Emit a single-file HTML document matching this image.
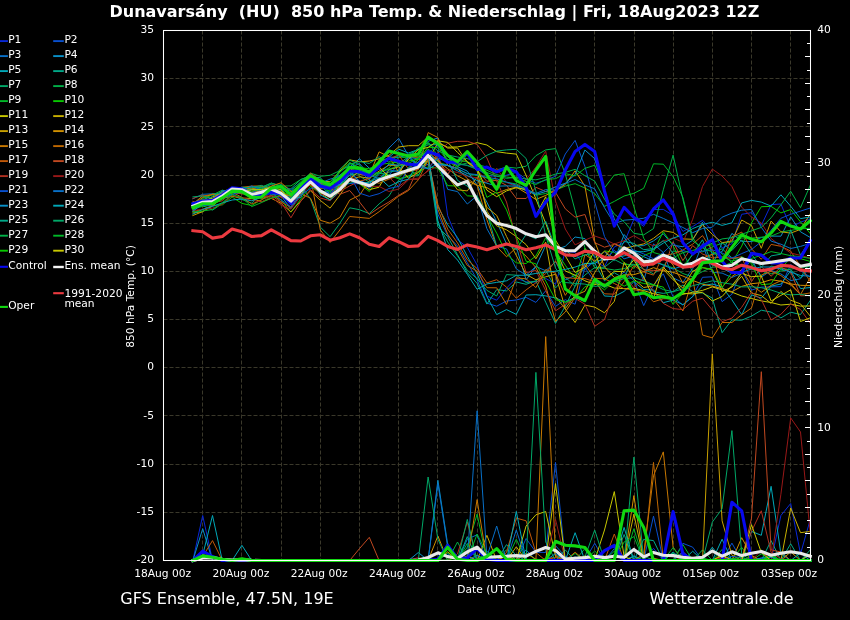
<!DOCTYPE html>
<html lang="de"><head><meta charset="utf-8"><title>Dunavarsány (HU) 850 hPa Temp. &amp; Niederschlag</title>
<style>html,body{margin:0;padding:0;background:#000;overflow:hidden}svg{display:block;will-change:transform}text{font-family:"DejaVu Sans", "Liberation Sans", sans-serif;fill:#fff}.t{font-size:10.67px}.m{fill:none;stroke-width:1;stroke-linejoin:round;stroke-linecap:square}.k{fill:none;stroke-width:3.1;stroke-linejoin:round;stroke-linecap:square}.g{stroke:#3a382a;stroke-width:1;stroke-dasharray:4 2;fill:none}.lg{stroke-width:1.9;fill:none}</style></head><body>
<svg width="850" height="620" viewBox="0 0 850 620">
<rect width="850" height="620" fill="#000"/>
<text x="434.4" y="16.6" text-anchor="middle" font-size="16" font-weight="bold" xml:space="preserve" style="white-space:pre">Dunavarsány  (HU)  850 hPa Temp. &amp; Niederschlag | Fri, 18Aug2023 12Z</text>
<path class="g" d="M202.50 30.5V560.5M241.50 30.5V560.5M281.50 30.5V560.5M320.50 30.5V560.5M359.50 30.5V560.5M398.50 30.5V560.5M437.50 30.5V560.5M477.50 30.5V560.5M516.50 30.5V560.5M555.50 30.5V560.5M594.50 30.5V560.5M634.50 30.5V560.5M673.50 30.5V560.5M712.50 30.5V560.5M751.50 30.5V560.5M790.50 30.5V560.5M163.5 78.50H810.5M163.5 126.50H810.5M163.5 175.50H810.5M163.5 223.50H810.5M163.5 271.50H810.5M163.5 319.50H810.5M163.5 367.50H810.5M163.5 415.50H810.5M163.5 464.50H810.5M163.5 512.50H810.5"/>
<clipPath id="cp"><rect x="161.5" y="30.5" width="651.0" height="532.5"/></clipPath>
<g clip-path="url(#cp)">
<polyline class="m" stroke="#0828d8" points="192.9,210.3 202.7,203.9 212.5,201.8 222.3,199.0 232.1,189.9 241.9,187.3 251.7,187.9 261.5,187.3 271.3,188.9 281.1,184.6 290.9,189.6 300.7,182.8 310.5,177.5 320.3,181.9 330.1,189.3 339.9,186.3 349.7,183.5 359.5,183.8 369.3,176.2 379.1,169.0 388.9,175.4 398.7,173.3 408.5,157.2 418.3,167.9 428.1,153.3 437.9,145.5 447.7,215.8 457.5,239.8 467.3,247.3 477.1,265.0 486.9,296.1 496.7,300.2 506.5,288.0 516.3,278.3 526.1,281.8 535.9,282.0 545.7,278.4 555.5,284.2 565.3,251.5 575.1,252.4 584.9,267.2 594.7,261.4 604.5,266.7 614.3,246.9 624.1,242.8 633.9,219.2 643.7,226.4 653.5,209.5 663.3,209.4 673.1,215.4 682.9,231.4 692.7,226.6 702.5,220.3 712.3,231.0 722.1,247.9 731.9,243.7 741.7,214.3 751.5,212.7 761.3,225.4 771.1,204.6 780.9,204.0 790.7,227.4 800.5,222.2 810.3,218.6"/>
<polyline class="m" stroke="#0850d0" points="192.9,204.8 202.7,204.3 212.5,204.6 222.3,195.4 232.1,194.5 241.9,192.8 251.7,195.9 261.5,189.1 271.3,193.6 281.1,193.7 290.9,204.8 300.7,192.0 310.5,183.6 320.3,190.4 330.1,193.5 339.9,175.7 349.7,171.1 359.5,181.1 369.3,188.3 379.1,179.4 388.9,175.2 398.7,163.9 408.5,164.2 418.3,167.8 428.1,164.3 437.9,214.2 447.7,235.7 457.5,246.0 467.3,262.7 477.1,279.7 486.9,303.1 496.7,306.2 506.5,301.0 516.3,300.0 526.1,297.4 535.9,302.4 545.7,290.8 555.5,306.4 565.3,299.7 575.1,304.2 584.9,267.6 594.7,281.7 604.5,287.3 614.3,281.3 624.1,272.0 633.9,280.5 643.7,305.6 653.5,285.1 663.3,273.8 673.1,296.8 682.9,305.1 692.7,296.5 702.5,277.3 712.3,276.8 722.1,301.6 731.9,294.3 741.7,269.3 751.5,290.1 761.3,287.1 771.1,286.9 780.9,286.6 790.7,264.5 800.5,270.8 810.3,277.1"/>
<polyline class="m" stroke="#0870c8" points="192.9,198.7 202.7,194.3 212.5,193.8 222.3,194.4 232.1,190.2 241.9,193.1 251.7,188.8 261.5,187.2 271.3,187.4 281.1,185.3 290.9,195.4 300.7,188.0 310.5,178.4 320.3,192.0 330.1,191.0 339.9,187.4 349.7,174.7 359.5,170.5 369.3,180.1 379.1,160.6 388.9,148.1 398.7,138.4 408.5,155.8 418.3,167.2 428.1,156.2 437.9,159.6 447.7,189.4 457.5,191.6 467.3,204.0 477.1,195.7 486.9,228.7 496.7,246.2 506.5,248.9 516.3,268.9 526.1,275.2 535.9,266.5 545.7,270.7 555.5,261.7 565.3,279.9 575.1,275.3 584.9,269.3 594.7,261.2 604.5,259.9 614.3,250.4 624.1,258.8 633.9,255.9 643.7,281.1 653.5,243.9 663.3,252.5 673.1,277.9 682.9,282.4 692.7,268.5 702.5,243.7 712.3,272.3 722.1,273.1 731.9,277.5 741.7,273.1 751.5,259.1 761.3,277.2 771.1,270.4 780.9,273.9 790.7,280.6 800.5,278.8 810.3,267.1"/>
<polyline class="m" stroke="#0890c8" points="192.9,204.8 202.7,200.7 212.5,199.9 222.3,190.8 232.1,193.0 241.9,188.7 251.7,186.4 261.5,187.4 271.3,183.1 281.1,186.0 290.9,191.9 300.7,184.7 310.5,176.0 320.3,182.5 330.1,181.7 339.9,175.2 349.7,167.1 359.5,158.8 369.3,168.2 379.1,168.1 388.9,157.2 398.7,157.3 408.5,154.9 418.3,153.4 428.1,141.3 437.9,137.9 447.7,156.4 457.5,166.7 467.3,171.1 477.1,185.0 486.9,202.3 496.7,221.6 506.5,243.9 516.3,246.7 526.1,279.8 535.9,266.6 545.7,245.3 555.5,249.7 565.3,246.3 575.1,237.0 584.9,238.6 594.7,257.6 604.5,251.8 614.3,260.6 624.1,234.5 633.9,246.0 643.7,245.6 653.5,240.9 663.3,233.8 673.1,245.3 682.9,246.7 692.7,240.2 702.5,222.1 712.3,254.7 722.1,251.6 731.9,233.4 741.7,241.3 751.5,241.6 761.3,237.5 771.1,236.1 780.9,236.2 790.7,216.9 800.5,231.8 810.3,237.5"/>
<polyline class="m" stroke="#00a8b8" points="192.9,205.0 202.7,195.4 212.5,202.8 222.3,196.0 232.1,188.7 241.9,191.6 251.7,194.8 261.5,194.4 271.3,191.3 281.1,195.8 290.9,208.8 300.7,194.2 310.5,181.0 320.3,185.7 330.1,193.9 339.9,185.9 349.7,162.6 359.5,170.3 369.3,173.8 379.1,162.6 388.9,157.3 398.7,149.2 408.5,153.0 418.3,149.5 428.1,160.4 437.9,206.7 447.7,224.7 457.5,237.5 467.3,256.3 477.1,273.6 486.9,296.6 496.7,314.6 506.5,309.6 516.3,314.4 526.1,295.0 535.9,294.7 545.7,295.9 555.5,297.9 565.3,302.2 575.1,297.3 584.9,301.7 594.7,279.6 604.5,296.0 614.3,296.5 624.1,291.4 633.9,281.7 643.7,289.7 653.5,289.9 663.3,302.7 673.1,300.1 682.9,304.6 692.7,296.6 702.5,285.7 712.3,284.0 722.1,286.9 731.9,299.8 741.7,314.8 751.5,294.9 761.3,298.1 771.1,286.1 780.9,284.1 790.7,270.7 800.5,288.6 810.3,287.5"/>
<polyline class="m" stroke="#00a888" points="192.9,209.7 202.7,204.3 212.5,199.6 222.3,191.6 232.1,191.6 241.9,189.5 251.7,189.6 261.5,188.9 271.3,184.3 281.1,188.5 290.9,200.4 300.7,185.0 310.5,176.9 320.3,177.7 330.1,188.3 339.9,185.1 349.7,183.2 359.5,181.5 369.3,184.9 379.1,178.4 388.9,172.1 398.7,170.4 408.5,156.3 418.3,164.9 428.1,161.2 437.9,226.8 447.7,236.7 457.5,254.7 467.3,272.7 477.1,283.4 486.9,304.1 496.7,289.6 506.5,290.9 516.3,282.0 526.1,284.3 535.9,280.9 545.7,302.2 555.5,323.4 565.3,306.1 575.1,286.0 584.9,263.4 594.7,263.1 604.5,280.8 614.3,272.7 624.1,278.6 633.9,255.7 643.7,277.9 653.5,291.8 663.3,293.4 673.1,291.7 682.9,285.1 692.7,291.6 702.5,293.1 712.3,298.0 722.1,332.7 731.9,319.9 741.7,320.2 751.5,316.1 761.3,310.2 771.1,312.1 780.9,317.9 790.7,312.2 800.5,314.5 810.3,300.5"/>
<polyline class="m" stroke="#00a868" points="192.9,208.2 202.7,205.7 212.5,210.1 222.3,203.5 232.1,195.0 241.9,199.5 251.7,203.1 261.5,194.1 271.3,187.5 281.1,191.8 290.9,196.0 300.7,185.0 310.5,199.1 320.3,227.1 330.1,236.7 339.9,223.2 349.7,207.8 359.5,209.7 369.3,213.6 379.1,203.9 388.9,196.2 398.7,180.1 408.5,176.1 418.3,175.8 428.1,157.0 437.9,223.5 447.7,242.0 457.5,255.9 467.3,270.3 477.1,278.7 486.9,290.4 496.7,296.0 506.5,274.6 516.3,275.2 526.1,282.6 535.9,281.2 545.7,270.4 555.5,288.0 565.3,277.1 575.1,286.4 584.9,275.0 594.7,267.6 604.5,267.2 614.3,259.5 624.1,264.5 633.9,264.3 643.7,269.1 653.5,273.9 663.3,266.8 673.1,251.1 682.9,251.8 692.7,272.1 702.5,263.1 712.3,254.2 722.1,248.7 731.9,257.8 741.7,259.8 751.5,261.6 761.3,276.3 771.1,266.1 780.9,268.1 790.7,269.9 800.5,278.0 810.3,261.5"/>
<polyline class="m" stroke="#00b048" points="192.9,203.0 202.7,200.3 212.5,193.9 222.3,194.4 232.1,190.2 241.9,193.1 251.7,188.5 261.5,186.5 271.3,187.4 281.1,184.5 290.9,190.8 300.7,181.8 310.5,173.1 320.3,176.3 330.1,175.3 339.9,170.6 349.7,165.9 359.5,176.0 369.3,182.2 379.1,173.1 388.9,175.5 398.7,173.6 408.5,169.5 418.3,175.1 428.1,161.1 437.9,156.2 447.7,161.7 457.5,165.6 467.3,162.9 477.1,164.8 486.9,166.9 496.7,169.9 506.5,167.1 516.3,168.1 526.1,166.2 535.9,155.7 545.7,149.9 555.5,148.6 565.3,173.9 575.1,210.5 584.9,247.8 594.7,268.0 604.5,268.4 614.3,270.0 624.1,268.6 633.9,264.9 643.7,263.9 653.5,261.7 663.3,264.6 673.1,267.9 682.9,273.5 692.7,276.9 702.5,271.6 712.3,267.1 722.1,266.7 731.9,262.3 741.7,266.5 751.5,269.5 761.3,270.9 771.1,273.9 780.9,271.0 790.7,269.1 800.5,267.7 810.3,266.3"/>
<polyline class="m" stroke="#00b828" points="192.9,207.2 202.7,198.5 212.5,195.0 222.3,190.1 232.1,193.0 241.9,188.7 251.7,192.7 261.5,187.4 271.3,183.1 281.1,186.0 290.9,185.9 300.7,179.5 310.5,176.0 320.3,183.4 330.1,192.4 339.9,176.8 349.7,168.5 359.5,169.7 369.3,177.9 379.1,172.7 388.9,168.0 398.7,157.0 408.5,157.9 418.3,155.9 428.1,151.8 437.9,161.9 447.7,165.3 457.5,169.0 467.3,173.5 477.1,175.6 486.9,178.0 496.7,180.9 506.5,182.2 516.3,184.0 526.1,188.8 535.9,195.2 545.7,193.5 555.5,190.2 565.3,186.1 575.1,183.7 584.9,188.0 594.7,193.5 604.5,206.4 614.3,201.4 624.1,196.0 633.9,193.3 643.7,188.3 653.5,163.8 663.3,164.2 673.1,176.7 682.9,197.3 692.7,237.7 702.5,252.0 712.3,246.8 722.1,243.2 731.9,242.0 741.7,238.0 751.5,238.1 761.3,237.2 771.1,236.1 780.9,232.1 790.7,230.4 800.5,228.8 810.3,228.3"/>
<polyline class="m" stroke="#08c800" points="192.9,209.1 202.7,206.3 212.5,205.3 222.3,204.9 232.1,197.1 241.9,203.4 251.7,205.5 261.5,199.6 271.3,196.0 281.1,199.8 290.9,212.2 300.7,199.2 310.5,186.5 320.3,193.2 330.1,194.0 339.9,184.9 349.7,178.8 359.5,183.9 369.3,191.5 379.1,177.7 388.9,174.9 398.7,178.9 408.5,175.9 418.3,171.5 428.1,167.0 437.9,168.2 447.7,185.6 457.5,186.1 467.3,195.8 477.1,196.4 486.9,215.5 496.7,233.2 506.5,254.1 516.3,262.9 526.1,263.5 535.9,256.0 545.7,237.8 555.5,250.7 565.3,265.3 575.1,278.6 584.9,248.0 594.7,262.3 604.5,250.9 614.3,252.3 624.1,262.6 633.9,268.3 643.7,255.7 653.5,251.5 663.3,231.7 673.1,245.6 682.9,266.4 692.7,254.6 702.5,245.8 712.3,244.9 722.1,254.0 731.9,262.6 741.7,246.1 751.5,222.9 761.3,206.7 771.1,206.4 780.9,212.9 790.7,209.5 800.5,221.9 810.3,233.6"/>
<polyline class="m" stroke="#c8c800" points="192.9,208.6 202.7,204.3 212.5,197.0 222.3,193.3 232.1,191.6 241.9,191.8 251.7,198.7 261.5,196.0 271.3,187.0 281.1,194.9 290.9,195.9 300.7,188.1 310.5,185.0 320.3,193.0 330.1,200.0 339.9,185.2 349.7,180.3 359.5,183.4 369.3,189.7 379.1,187.2 388.9,169.6 398.7,166.8 408.5,178.2 418.3,172.6 428.1,160.1 437.9,142.8 447.7,147.2 457.5,146.9 467.3,145.2 477.1,142.7 486.9,145.0 496.7,151.7 506.5,153.1 516.3,154.1 526.1,175.3 535.9,198.9 545.7,223.3 555.5,250.2 565.3,271.0 575.1,275.1 584.9,280.8 594.7,284.4 604.5,284.1 614.3,288.1 624.1,288.6 633.9,288.3 643.7,290.6 653.5,293.7 663.3,295.8 673.1,297.9 682.9,294.3 692.7,292.3 702.5,290.4 712.3,286.9 722.1,289.9 731.9,292.1 741.7,296.0 751.5,298.5 761.3,300.9 771.1,302.5 780.9,305.0 790.7,304.2 800.5,306.1 810.3,306.0"/>
<polyline class="m" stroke="#c8b000" points="192.9,213.0 202.7,211.6 212.5,205.8 222.3,197.0 232.1,190.0 241.9,190.7 251.7,198.4 261.5,193.4 271.3,189.1 281.1,196.6 290.9,201.8 300.7,195.5 310.5,179.7 320.3,180.8 330.1,181.9 339.9,171.1 349.7,159.9 359.5,161.7 369.3,161.1 379.1,158.8 388.9,155.4 398.7,147.0 408.5,145.7 418.3,145.7 428.1,137.1 437.9,141.7 447.7,148.1 457.5,148.0 467.3,162.4 477.1,170.6 486.9,211.2 496.7,225.9 506.5,229.8 516.3,236.6 526.1,244.6 535.9,258.8 545.7,242.1 555.5,296.5 565.3,309.0 575.1,322.5 584.9,305.1 594.7,307.1 604.5,312.8 614.3,301.3 624.1,262.4 633.9,279.1 643.7,287.5 653.5,285.8 663.3,269.3 673.1,279.8 682.9,288.1 692.7,271.1 702.5,267.7 712.3,269.6 722.1,291.6 731.9,287.1 741.7,276.2 751.5,293.1 761.3,295.6 771.1,303.4 780.9,291.4 790.7,300.2 800.5,303.9 810.3,316.2"/>
<polyline class="m" stroke="#c8a000" points="192.9,215.5 202.7,211.6 212.5,205.5 222.3,198.2 232.1,196.3 241.9,198.0 251.7,198.5 261.5,201.8 271.3,198.3 281.1,203.4 290.9,211.9 300.7,201.0 310.5,190.7 320.3,200.4 330.1,208.1 339.9,195.1 349.7,180.0 359.5,176.7 369.3,178.3 379.1,171.1 388.9,165.2 398.7,165.4 408.5,163.1 418.3,164.4 428.1,160.6 437.9,158.4 447.7,176.4 457.5,189.8 467.3,190.9 477.1,177.0 486.9,207.4 496.7,215.4 506.5,236.4 516.3,255.5 526.1,274.4 535.9,279.8 545.7,276.8 555.5,274.3 565.3,308.6 575.1,295.4 584.9,291.3 594.7,272.6 604.5,257.6 614.3,243.5 624.1,248.5 633.9,246.1 643.7,243.9 653.5,238.3 663.3,230.7 673.1,232.4 682.9,238.9 692.7,239.3 702.5,224.6 712.3,234.3 722.1,242.7 731.9,241.0 741.7,220.0 751.5,225.5 761.3,248.3 771.1,221.0 780.9,231.8 790.7,233.1 800.5,229.4 810.3,213.7"/>
<polyline class="m" stroke="#d09000" points="192.9,205.3 202.7,197.4 212.5,194.2 222.3,195.2 232.1,193.0 241.9,187.5 251.7,191.9 261.5,190.9 271.3,190.2 281.1,194.3 290.9,201.1 300.7,188.3 310.5,174.3 320.3,183.3 330.1,187.0 339.9,184.7 349.7,168.3 359.5,174.6 369.3,175.0 379.1,151.9 388.9,156.7 398.7,172.2 408.5,156.9 418.3,157.2 428.1,152.2 437.9,160.7 447.7,168.8 457.5,175.8 467.3,180.9 477.1,185.4 486.9,187.6 496.7,193.4 506.5,189.5 516.3,187.1 526.1,193.0 535.9,199.5 545.7,195.4 555.5,190.4 565.3,184.5 575.1,170.8 584.9,186.0 594.7,241.4 604.5,266.8 614.3,277.5 624.1,275.0 633.9,274.7 643.7,271.6 653.5,267.7 663.3,270.6 673.1,272.3 682.9,276.0 692.7,280.4 702.5,284.2 712.3,286.2 722.1,288.5 731.9,291.7 741.7,286.4 751.5,283.7 761.3,282.7 771.1,279.7 780.9,281.2 790.7,283.9 800.5,285.3 810.3,285.6"/>
<polyline class="m" stroke="#c87800" points="192.9,204.8 202.7,199.8 212.5,201.7 222.3,191.5 232.1,188.7 241.9,189.4 251.7,188.1 261.5,190.3 271.3,186.0 281.1,182.8 290.9,191.2 300.7,193.6 310.5,198.2 320.3,220.3 330.1,223.2 339.9,217.4 349.7,200.1 359.5,195.3 369.3,180.6 379.1,183.3 388.9,179.1 398.7,175.5 408.5,171.7 418.3,169.5 428.1,132.6 437.9,137.5 447.7,165.4 457.5,168.4 467.3,178.7 477.1,185.2 486.9,219.8 496.7,246.7 506.5,256.8 516.3,247.6 526.1,256.1 535.9,267.6 545.7,285.9 555.5,321.5 565.3,311.9 575.1,297.4 584.9,254.5 594.7,261.2 604.5,251.1 614.3,258.7 624.1,248.1 633.9,258.7 643.7,263.4 653.5,265.2 663.3,254.3 673.1,265.1 682.9,283.1 692.7,277.7 702.5,258.2 712.3,254.2 722.1,287.2 731.9,276.6 741.7,269.7 751.5,285.0 761.3,292.3 771.1,285.3 780.9,280.7 790.7,284.9 800.5,294.6 810.3,277.4"/>
<polyline class="m" stroke="#c06800" points="192.9,203.6 202.7,196.0 212.5,194.5 222.3,195.9 232.1,191.6 241.9,187.3 251.7,186.1 261.5,185.9 271.3,188.9 281.1,191.3 290.9,196.9 300.7,185.6 310.5,177.0 320.3,230.0 330.1,242.5 339.9,230.0 349.7,216.5 359.5,217.4 369.3,218.4 379.1,211.7 388.9,203.9 398.7,196.2 408.5,190.5 418.3,179.9 428.1,159.7 437.9,209.3 447.7,234.2 457.5,248.5 467.3,265.4 477.1,271.3 486.9,287.7 496.7,287.8 506.5,304.4 516.3,277.9 526.1,278.8 535.9,287.6 545.7,269.5 555.5,273.3 565.3,295.4 575.1,280.0 584.9,264.2 594.7,278.3 604.5,278.8 614.3,283.5 624.1,288.8 633.9,289.7 643.7,291.5 653.5,301.8 663.3,298.7 673.1,298.8 682.9,311.0 692.7,278.1 702.5,335.0 712.3,337.9 722.1,322.5 731.9,322.5 741.7,314.8 751.5,308.0 761.3,275.0 771.1,271.3 780.9,275.5 790.7,283.3 800.5,294.6 810.3,292.9"/>
<polyline class="m" stroke="#c05808" points="192.9,211.6 202.7,209.4 212.5,205.6 222.3,196.3 232.1,192.1 241.9,197.3 251.7,204.0 261.5,200.1 271.3,191.7 281.1,201.9 290.9,207.5 300.7,191.0 310.5,184.9 320.3,188.4 330.1,188.2 339.9,186.2 349.7,180.6 359.5,181.2 369.3,178.6 379.1,159.9 388.9,159.4 398.7,154.8 408.5,169.2 418.3,159.4 428.1,159.3 437.9,204.5 447.7,229.1 457.5,242.9 467.3,259.7 477.1,268.6 486.9,282.9 496.7,279.7 506.5,287.1 516.3,298.2 526.1,289.9 535.9,282.8 545.7,273.6 555.5,260.9 565.3,277.6 575.1,278.4 584.9,278.6 594.7,281.8 604.5,293.8 614.3,294.2 624.1,281.7 633.9,265.6 643.7,272.0 653.5,275.1 663.3,255.6 673.1,253.9 682.9,250.1 692.7,244.1 702.5,235.6 712.3,250.4 722.1,261.4 731.9,236.8 741.7,232.1 751.5,248.8 761.3,259.3 771.1,244.4 780.9,246.3 790.7,251.1 800.5,266.4 810.3,281.7"/>
<polyline class="m" stroke="#c04820" points="192.9,201.4 202.7,204.7 212.5,202.7 222.3,200.8 232.1,191.5 241.9,194.0 251.7,193.8 261.5,198.5 271.3,195.7 281.1,197.0 290.9,201.3 300.7,186.2 310.5,173.1 320.3,180.6 330.1,188.4 339.9,194.3 349.7,190.5 359.5,202.0 369.3,214.5 379.1,207.8 388.9,202.0 398.7,195.3 408.5,189.5 418.3,166.9 428.1,150.5 437.9,158.3 447.7,174.4 457.5,160.5 467.3,161.4 477.1,170.3 486.9,181.4 496.7,180.3 506.5,185.3 516.3,198.4 526.1,198.5 535.9,187.3 545.7,191.5 555.5,192.3 565.3,208.8 575.1,217.2 584.9,214.5 594.7,242.6 604.5,247.2 614.3,244.3 624.1,247.6 633.9,254.2 643.7,270.0 653.5,270.4 663.3,270.8 673.1,241.8 682.9,260.6 692.7,245.6 702.5,254.0 712.3,257.9 722.1,257.1 731.9,258.4 741.7,256.8 751.5,281.6 761.3,266.7 771.1,276.2 780.9,267.1 790.7,272.1 800.5,295.8 810.3,295.5"/>
<polyline class="m" stroke="#b03020" points="192.9,198.5 202.7,195.0 212.5,199.9 222.3,193.0 232.1,191.1 241.9,190.4 251.7,194.9 261.5,197.0 271.3,195.6 281.1,202.3 290.9,217.8 300.7,201.5 310.5,189.6 320.3,198.0 330.1,200.7 339.9,191.5 349.7,185.9 359.5,181.2 369.3,186.8 379.1,178.1 388.9,177.2 398.7,186.6 408.5,179.2 418.3,179.3 428.1,170.2 437.9,153.1 447.7,143.2 457.5,141.3 467.3,141.3 477.1,144.4 486.9,157.9 496.7,181.2 506.5,202.0 516.3,239.1 526.1,272.6 535.9,270.4 545.7,290.7 555.5,310.9 565.3,304.2 575.1,298.4 584.9,304.2 594.7,326.3 604.5,319.6 614.3,290.7 624.1,275.3 633.9,287.9 643.7,277.8 653.5,291.5 663.3,303.4 673.1,308.6 682.9,309.6 692.7,301.2 702.5,298.2 712.3,310.0 722.1,321.7 731.9,318.1 741.7,307.3 751.5,292.1 761.3,299.6 771.1,320.0 780.9,314.3 790.7,303.9 800.5,309.5 810.3,323.3"/>
<polyline class="m" stroke="#981818" points="192.9,210.5 202.7,209.3 212.5,208.1 222.3,204.3 232.1,195.5 241.9,198.0 251.7,200.3 261.5,202.0 271.3,196.7 281.1,205.3 290.9,209.1 300.7,196.5 310.5,183.6 320.3,194.3 330.1,195.7 339.9,178.5 349.7,175.5 359.5,182.1 369.3,186.3 379.1,186.4 388.9,191.5 398.7,189.1 408.5,179.9 418.3,178.0 428.1,171.0 437.9,165.9 447.7,170.4 457.5,172.5 467.3,176.5 477.1,177.8 486.9,182.7 496.7,168.1 506.5,182.6 516.3,186.4 526.1,179.6 535.9,167.2 545.7,151.1 555.5,201.1 565.3,229.0 575.1,244.9 584.9,240.2 594.7,236.0 604.5,239.3 614.3,244.0 624.1,240.7 633.9,235.7 643.7,241.3 653.5,246.0 663.3,241.0 673.1,237.9 682.9,242.4 692.7,219.3 702.5,186.5 712.3,169.1 722.1,176.0 731.9,186.5 741.7,207.1 751.5,217.1 761.3,222.9 771.1,238.5 780.9,246.1 790.7,253.0 800.5,255.4 810.3,258.1"/>
<polyline class="m" stroke="#0850d0" points="192.9,207.3 202.7,205.5 212.5,205.1 222.3,190.4 232.1,191.6 241.9,187.3 251.7,192.4 261.5,189.1 271.3,192.0 281.1,199.9 290.9,206.7 300.7,194.8 310.5,188.6 320.3,185.6 330.1,194.8 339.9,182.3 349.7,175.2 359.5,193.1 369.3,196.4 379.1,193.7 388.9,188.5 398.7,186.4 408.5,167.1 418.3,167.5 428.1,168.5 437.9,157.9 447.7,162.2 457.5,164.4 467.3,165.2 477.1,168.8 486.9,175.2 496.7,176.5 506.5,175.2 516.3,172.3 526.1,178.9 535.9,183.3 545.7,180.1 555.5,176.3 565.3,154.0 575.1,140.4 584.9,166.4 594.7,201.9 604.5,236.6 614.3,252.5 624.1,249.8 633.9,250.0 643.7,253.9 653.5,258.8 663.3,252.5 673.1,243.4 682.9,250.5 692.7,253.5 702.5,251.0 712.3,249.9 722.1,253.0 731.9,258.1 741.7,253.6 751.5,249.5 761.3,241.7 771.1,230.2 780.9,218.3 790.7,214.3 800.5,211.1 810.3,208.0"/>
<polyline class="m" stroke="#0870c8" points="192.9,204.5 202.7,202.6 212.5,203.9 222.3,198.6 232.1,194.5 241.9,190.2 251.7,185.9 261.5,190.1 271.3,189.2 281.1,193.6 290.9,197.6 300.7,188.4 310.5,177.4 320.3,183.2 330.1,179.1 339.9,176.5 349.7,167.6 359.5,163.5 369.3,174.8 379.1,178.7 388.9,169.9 398.7,171.7 408.5,157.2 418.3,159.0 428.1,150.7 437.9,164.6 447.7,165.4 457.5,168.4 467.3,173.6 477.1,174.6 486.9,177.4 496.7,178.8 506.5,182.1 516.3,185.2 526.1,189.2 535.9,193.4 545.7,189.6 555.5,190.0 565.3,183.4 575.1,179.5 584.9,185.0 594.7,188.8 604.5,207.8 614.3,223.7 624.1,220.2 633.9,219.4 643.7,218.3 653.5,214.3 663.3,218.4 673.1,222.9 682.9,227.5 692.7,232.7 702.5,228.5 712.3,227.2 722.1,217.2 731.9,213.1 741.7,210.2 751.5,209.4 761.3,227.3 771.1,241.1 780.9,244.2 790.7,248.5 800.5,246.4 810.3,243.4"/>
<polyline class="m" stroke="#0890c8" points="192.9,211.2 202.7,204.0 212.5,204.1 222.3,198.4 232.1,191.9 241.9,187.8 251.7,198.4 261.5,197.5 271.3,187.8 281.1,195.3 290.9,202.1 300.7,188.9 310.5,177.0 320.3,182.1 330.1,184.6 339.9,184.2 349.7,172.6 359.5,181.3 369.3,183.6 379.1,174.5 388.9,164.0 398.7,165.4 408.5,164.8 418.3,162.7 428.1,169.2 437.9,163.5 447.7,165.6 457.5,170.8 467.3,175.5 477.1,180.5 486.9,183.2 496.7,186.2 506.5,185.9 516.3,186.2 526.1,190.8 535.9,194.4 545.7,191.5 555.5,186.8 565.3,183.2 575.1,174.6 584.9,150.0 594.7,158.7 604.5,191.2 614.3,218.8 624.1,237.3 633.9,251.6 643.7,256.7 653.5,261.0 663.3,265.2 673.1,269.1 682.9,265.8 692.7,263.0 702.5,259.0 712.3,264.8 722.1,268.2 731.9,273.2 741.7,272.2 751.5,269.0 761.3,266.9 771.1,267.1 780.9,269.0 790.7,272.1 800.5,275.5 810.3,276.2"/>
<polyline class="m" stroke="#00a8b8" points="192.9,214.1 202.7,209.4 212.5,206.4 222.3,202.9 232.1,200.0 241.9,199.0 251.7,200.8 261.5,197.4 271.3,187.9 281.1,195.2 290.9,198.4 300.7,197.6 310.5,178.6 320.3,194.7 330.1,200.0 339.9,190.8 349.7,180.1 359.5,183.7 369.3,182.1 379.1,177.6 388.9,186.5 398.7,181.7 408.5,179.2 418.3,161.7 428.1,153.7 437.9,220.7 447.7,249.6 457.5,260.0 467.3,274.3 477.1,289.3 486.9,283.9 496.7,282.4 506.5,280.8 516.3,275.3 526.1,275.2 535.9,273.4 545.7,272.2 555.5,271.2 565.3,269.4 575.1,267.1 584.9,263.5 594.7,263.6 604.5,257.5 614.3,257.6 624.1,255.9 633.9,251.7 643.7,251.7 653.5,249.5 663.3,243.1 673.1,238.1 682.9,234.9 692.7,228.6 702.5,224.6 712.3,222.2 722.1,225.4 731.9,222.8 741.7,202.9 751.5,200.4 761.3,202.1 771.1,206.1 780.9,194.8 790.7,206.2 800.5,218.6 810.3,217.0"/>
<polyline class="m" stroke="#00a888" points="192.9,205.9 202.7,204.3 212.5,196.1 222.3,191.4 232.1,188.7 241.9,191.6 251.7,189.8 261.5,189.9 271.3,194.7 281.1,194.4 290.9,201.8 300.7,186.5 310.5,182.0 320.3,187.5 330.1,188.3 339.9,185.4 349.7,175.1 359.5,173.3 369.3,172.5 379.1,166.5 388.9,158.3 398.7,164.0 408.5,156.6 418.3,148.3 428.1,144.8 437.9,144.6 447.7,160.4 457.5,180.4 467.3,186.1 477.1,196.5 486.9,213.3 496.7,246.0 506.5,244.1 516.3,249.6 526.1,234.4 535.9,238.8 545.7,221.2 555.5,247.8 565.3,249.4 575.1,258.8 584.9,254.9 594.7,252.8 604.5,258.1 614.3,259.7 624.1,241.4 633.9,243.4 643.7,249.7 653.5,248.5 663.3,240.5 673.1,253.3 682.9,269.2 692.7,254.1 702.5,239.8 712.3,265.4 722.1,242.8 731.9,250.5 741.7,239.9 751.5,254.2 761.3,267.3 771.1,255.9 780.9,254.2 790.7,230.0 800.5,255.2 810.3,239.9"/>
<polyline class="m" stroke="#00a868" points="192.9,196.9 202.7,195.9 212.5,198.6 222.3,192.8 232.1,191.6 241.9,187.3 251.7,187.7 261.5,185.4 271.3,188.9 281.1,190.2 290.9,188.7 300.7,179.6 310.5,175.5 320.3,184.4 330.1,185.8 339.9,172.1 349.7,164.2 359.5,161.5 369.3,163.5 379.1,156.7 388.9,162.2 398.7,155.4 408.5,154.4 418.3,149.4 428.1,142.5 437.9,150.9 447.7,155.0 457.5,157.0 467.3,158.6 477.1,161.7 486.9,155.3 496.7,151.1 506.5,149.9 516.3,149.3 526.1,158.5 535.9,191.0 545.7,235.5 555.5,268.0 565.3,282.5 575.1,283.4 584.9,284.1 594.7,286.4 604.5,285.5 614.3,281.6 624.1,278.7 633.9,277.6 643.7,280.8 653.5,284.7 663.3,289.6 673.1,291.7 682.9,288.9 692.7,285.7 702.5,283.3 712.3,280.8 722.1,282.7 731.9,284.2 741.7,286.9 751.5,286.8 761.3,287.7 771.1,290.0 780.9,293.3 790.7,294.9 800.5,294.3 810.3,296.0"/>
<polyline class="m" stroke="#00b048" points="192.9,202.5 202.7,201.7 212.5,198.3 222.3,197.7 232.1,192.2 241.9,190.1 251.7,197.5 261.5,193.9 271.3,190.5 281.1,195.3 290.9,198.1 300.7,186.1 310.5,175.6 320.3,184.8 330.1,186.6 339.9,169.2 349.7,159.9 359.5,164.8 369.3,177.1 379.1,172.4 388.9,175.1 398.7,177.9 408.5,167.8 418.3,159.7 428.1,149.3 437.9,155.5 447.7,159.2 457.5,163.1 467.3,165.6 477.1,169.4 486.9,172.5 496.7,176.2 506.5,178.3 516.3,177.2 526.1,179.1 535.9,179.8 545.7,177.5 555.5,174.0 565.3,172.4 575.1,169.3 584.9,175.7 594.7,181.1 604.5,199.1 614.3,214.1 624.1,221.7 633.9,233.3 643.7,234.9 653.5,228.6 663.3,189.8 673.1,155.1 682.9,199.4 692.7,240.8 702.5,247.7 712.3,243.1 722.1,238.9 731.9,237.7 741.7,234.3 751.5,230.8 761.3,227.4 771.1,217.8 780.9,204.8 790.7,191.3 800.5,207.7 810.3,185.2"/>
<polyline class="m" stroke="#00b828" points="192.9,211.9 202.7,211.0 212.5,209.5 222.3,202.8 232.1,194.5 241.9,197.7 251.7,206.6 261.5,202.6 271.3,198.0 281.1,194.9 290.9,202.2 300.7,188.5 310.5,182.3 320.3,192.4 330.1,190.0 339.9,181.8 349.7,172.4 359.5,172.8 369.3,174.1 379.1,172.4 388.9,169.2 398.7,166.0 408.5,163.5 418.3,157.8 428.1,142.8 437.9,155.5 447.7,159.4 457.5,160.3 467.3,161.7 477.1,166.1 486.9,170.3 496.7,174.6 506.5,177.0 516.3,178.3 526.1,181.4 535.9,184.5 545.7,179.5 555.5,178.7 565.3,173.6 575.1,175.9 584.9,168.4 594.7,165.2 604.5,187.9 614.3,175.0 624.1,173.7 633.9,206.8 643.7,238.2 653.5,252.5 663.3,255.3 673.1,257.9 682.9,252.7 692.7,250.4 702.5,247.8 712.3,252.0 722.1,256.6 731.9,260.9 741.7,259.0 751.5,258.4 761.3,255.3 771.1,251.6 780.9,253.5 790.7,255.7 800.5,256.7 810.3,258.5"/>
<polyline class="m" stroke="#08c800" points="192.9,206.0 202.7,202.8 212.5,201.3 222.3,194.7 232.1,193.0 241.9,189.5 251.7,191.2 261.5,188.9 271.3,190.5 281.1,193.2 290.9,193.4 300.7,190.5 310.5,181.5 320.3,186.2 330.1,182.0 339.9,171.8 349.7,162.6 359.5,167.5 369.3,168.8 379.1,164.5 388.9,163.3 398.7,162.1 408.5,161.0 418.3,159.3 428.1,147.3 437.9,147.7 447.7,161.1 457.5,167.5 467.3,154.1 477.1,169.1 486.9,197.4 496.7,191.9 506.5,209.9 516.3,236.4 526.1,261.2 535.9,263.8 545.7,281.0 555.5,299.7 565.3,302.1 575.1,298.8 584.9,286.8 594.7,282.7 604.5,289.9 614.3,280.4 624.1,286.2 633.9,280.9 643.7,283.5 653.5,284.8 663.3,287.1 673.1,304.4 682.9,292.9 692.7,280.8 702.5,267.4 712.3,269.4 722.1,287.6 731.9,272.1 741.7,256.6 751.5,263.6 761.3,284.7 771.1,283.8 780.9,268.6 790.7,257.5 800.5,258.7 810.3,261.4"/>
<polyline class="m" stroke="#c8c800" points="192.9,206.3 202.7,200.4 212.5,198.6 222.3,193.0 232.1,188.7 241.9,191.6 251.7,189.8 261.5,189.6 271.3,187.2 281.1,189.8 290.9,200.9 300.7,190.0 310.5,181.4 320.3,190.4 330.1,196.9 339.9,191.3 349.7,178.9 359.5,171.0 369.3,175.3 379.1,166.9 388.9,176.9 398.7,173.1 408.5,159.1 418.3,149.6 428.1,147.4 437.9,140.8 447.7,142.4 457.5,152.4 467.3,161.7 477.1,169.1 486.9,190.2 496.7,196.7 506.5,190.9 516.3,187.7 526.1,189.5 535.9,215.3 545.7,196.8 555.5,240.2 565.3,255.9 575.1,272.5 584.9,267.4 594.7,251.1 604.5,279.4 614.3,271.3 624.1,271.7 633.9,259.8 643.7,276.9 653.5,298.2 663.3,267.3 673.1,277.3 682.9,293.3 692.7,293.9 702.5,292.3 712.3,301.0 722.1,296.5 731.9,285.7 741.7,273.3 751.5,276.7 761.3,276.0 771.1,301.0 780.9,295.4 790.7,289.8 800.5,321.5 810.3,317.8"/>
<polyline class="m" stroke="#0828d8" points="192.9,560.5 202.7,515.5 212.5,560.5 222.3,560.5 232.1,560.5 241.9,560.5 251.7,560.5 261.5,560.5 271.3,560.5 281.1,560.5 290.9,560.5 300.7,560.5 310.5,560.5 320.3,560.5 330.1,560.5 339.9,560.5 349.7,560.5 359.5,560.5 369.3,560.5 379.1,560.5 388.9,560.5 398.7,560.5 408.5,560.5 418.3,560.5 428.1,560.5 437.9,560.5 447.7,560.5 457.5,560.5 467.3,560.5 477.1,556.8 486.9,560.5 496.7,560.5 506.5,560.5 516.3,560.5 526.1,560.5 535.9,560.5 545.7,560.5 555.5,560.5 565.3,559.0 575.1,560.5 584.9,560.5 594.7,560.5 604.5,560.5 614.3,560.5 624.1,560.5 633.9,560.5 643.7,560.5 653.5,548.3 663.3,560.5 673.1,560.5 682.9,560.5 692.7,560.5 702.5,560.5 712.3,560.5 722.1,560.5 731.9,560.5 741.7,560.5 751.5,560.5 761.3,560.5 771.1,560.5 780.9,515.5 790.7,503.5 800.5,553.9 810.3,519.4"/>
<polyline class="m" stroke="#0850d0" points="192.9,560.5 202.7,560.5 212.5,560.5 222.3,560.5 232.1,560.5 241.9,560.5 251.7,560.5 261.5,560.5 271.3,560.5 281.1,560.5 290.9,560.5 300.7,560.5 310.5,560.5 320.3,560.5 330.1,560.5 339.9,560.5 349.7,560.5 359.5,560.5 369.3,560.5 379.1,560.5 388.9,560.5 398.7,560.5 408.5,560.5 418.3,560.5 428.1,558.4 437.9,560.5 447.7,553.7 457.5,560.5 467.3,560.5 477.1,560.5 486.9,560.5 496.7,560.5 506.5,560.5 516.3,560.5 526.1,538.5 535.9,552.2 545.7,552.5 555.5,462.4 565.3,560.5 575.1,560.5 584.9,560.2 594.7,543.3 604.5,560.5 614.3,560.5 624.1,560.5 633.9,560.5 643.7,560.5 653.5,516.1 663.3,560.5 673.1,560.5 682.9,543.3 692.7,547.2 702.5,560.5 712.3,560.5 722.1,560.5 731.9,543.1 741.7,560.5 751.5,560.5 761.3,560.5 771.1,560.5 780.9,560.5 790.7,560.5 800.5,560.5 810.3,560.5"/>
<polyline class="m" stroke="#0870c8" points="192.9,560.5 202.7,560.5 212.5,560.5 222.3,560.5 232.1,560.5 241.9,560.5 251.7,560.5 261.5,560.5 271.3,560.5 281.1,560.5 290.9,560.5 300.7,560.5 310.5,560.5 320.3,560.5 330.1,560.5 339.9,560.5 349.7,560.5 359.5,560.5 369.3,560.5 379.1,560.5 388.9,560.5 398.7,560.5 408.5,560.5 418.3,560.5 428.1,560.5 437.9,559.5 447.7,543.3 457.5,560.5 467.3,539.3 477.1,534.7 486.9,560.5 496.7,560.5 506.5,560.5 516.3,560.5 526.1,549.9 535.9,560.5 545.7,560.5 555.5,545.7 565.3,556.4 575.1,560.5 584.9,560.5 594.7,560.5 604.5,560.5 614.3,548.6 624.1,560.5 633.9,560.5 643.7,560.5 653.5,560.5 663.3,560.5 673.1,560.5 682.9,560.5 692.7,560.5 702.5,560.5 712.3,560.5 722.1,560.5 731.9,560.5 741.7,560.5 751.5,560.5 761.3,560.5 771.1,560.5 780.9,560.5 790.7,560.5 800.5,560.5 810.3,560.5"/>
<polyline class="m" stroke="#0890c8" points="192.9,560.5 202.7,528.7 212.5,560.5 222.3,560.5 232.1,560.5 241.9,560.5 251.7,560.5 261.5,560.5 271.3,560.5 281.1,560.5 290.9,560.5 300.7,560.5 310.5,560.5 320.3,560.5 330.1,560.5 339.9,560.5 349.7,560.5 359.5,560.5 369.3,560.5 379.1,560.5 388.9,560.5 398.7,560.5 408.5,560.5 418.3,560.5 428.1,560.5 437.9,480.3 447.7,544.6 457.5,560.5 467.3,560.5 477.1,560.5 486.9,560.5 496.7,560.5 506.5,560.5 516.3,560.5 526.1,560.5 535.9,560.5 545.7,560.5 555.5,560.5 565.3,560.5 575.1,560.5 584.9,560.5 594.7,560.5 604.5,560.5 614.3,560.5 624.1,560.5 633.9,555.8 643.7,560.5 653.5,560.5 663.3,560.5 673.1,560.5 682.9,560.5 692.7,560.5 702.5,560.5 712.3,560.5 722.1,560.5 731.9,560.5 741.7,560.5 751.5,560.5 761.3,560.5 771.1,560.5 780.9,560.5 790.7,560.5 800.5,560.5 810.3,560.5"/>
<polyline class="m" stroke="#00a8b8" points="192.9,560.5 202.7,560.5 212.5,560.5 222.3,560.5 232.1,560.5 241.9,560.5 251.7,560.5 261.5,560.5 271.3,560.5 281.1,560.5 290.9,560.5 300.7,560.5 310.5,560.5 320.3,560.5 330.1,560.5 339.9,560.5 349.7,560.5 359.5,560.5 369.3,560.5 379.1,560.5 388.9,560.5 398.7,560.5 408.5,560.5 418.3,560.5 428.1,560.5 437.9,560.5 447.7,560.5 457.5,560.5 467.3,560.5 477.1,560.5 486.9,560.5 496.7,560.5 506.5,560.5 516.3,560.5 526.1,560.5 535.9,560.5 545.7,560.5 555.5,560.5 565.3,560.5 575.1,559.5 584.9,560.5 594.7,560.5 604.5,560.5 614.3,560.5 624.1,560.5 633.9,556.7 643.7,560.5 653.5,559.6 663.3,560.5 673.1,560.5 682.9,560.5 692.7,551.2 702.5,560.5 712.3,547.2 722.1,560.5 731.9,560.5 741.7,560.5 751.5,531.4 761.3,535.3 771.1,486.3 780.9,553.9 790.7,560.5 800.5,560.5 810.3,554.8"/>
<polyline class="m" stroke="#00a888" points="192.9,560.5 202.7,560.5 212.5,560.5 222.3,560.5 232.1,560.5 241.9,560.5 251.7,560.5 261.5,560.5 271.3,560.5 281.1,560.5 290.9,560.5 300.7,560.5 310.5,560.5 320.3,560.5 330.1,560.5 339.9,560.5 349.7,560.5 359.5,560.5 369.3,560.5 379.1,560.5 388.9,560.5 398.7,560.5 408.5,560.5 418.3,560.5 428.1,560.5 437.9,560.5 447.7,560.5 457.5,560.5 467.3,536.6 477.1,560.5 486.9,560.5 496.7,560.5 506.5,560.5 516.3,560.5 526.1,560.5 535.9,560.5 545.7,560.5 555.5,560.5 565.3,560.5 575.1,560.5 584.9,560.5 594.7,559.8 604.5,560.5 614.3,560.5 624.1,560.5 633.9,560.5 643.7,560.5 653.5,560.5 663.3,560.5 673.1,560.5 682.9,560.5 692.7,560.5 702.5,560.5 712.3,560.5 722.1,560.5 731.9,560.5 741.7,560.5 751.5,560.5 761.3,560.5 771.1,540.6 780.9,560.5 790.7,560.5 800.5,560.5 810.3,549.9"/>
<polyline class="m" stroke="#00a868" points="192.9,560.5 202.7,560.5 212.5,560.5 222.3,560.5 232.1,560.5 241.9,560.5 251.7,560.5 261.5,560.5 271.3,560.5 281.1,560.5 290.9,560.5 300.7,560.5 310.5,560.5 320.3,560.5 330.1,560.5 339.9,560.5 349.7,560.5 359.5,560.5 369.3,560.5 379.1,560.5 388.9,560.5 398.7,560.5 408.5,560.5 418.3,560.5 428.1,560.5 437.9,560.5 447.7,560.5 457.5,560.5 467.3,560.5 477.1,560.5 486.9,556.0 496.7,560.5 506.5,560.5 516.3,560.5 526.1,560.5 535.9,560.5 545.7,560.5 555.5,560.5 565.3,560.5 575.1,560.5 584.9,560.5 594.7,560.5 604.5,560.5 614.3,560.5 624.1,560.5 633.9,560.5 643.7,560.5 653.5,560.5 663.3,560.5 673.1,560.5 682.9,560.5 692.7,560.5 702.5,560.5 712.3,560.5 722.1,560.5 731.9,558.8 741.7,560.5 751.5,560.5 761.3,560.5 771.1,560.5 780.9,551.5 790.7,560.5 800.5,560.5 810.3,560.5"/>
<polyline class="m" stroke="#00b048" points="192.9,560.5 202.7,560.5 212.5,560.5 222.3,560.5 232.1,560.5 241.9,560.5 251.7,560.5 261.5,560.5 271.3,560.5 281.1,560.5 290.9,560.5 300.7,560.5 310.5,560.5 320.3,560.5 330.1,560.5 339.9,560.5 349.7,560.5 359.5,560.5 369.3,560.5 379.1,560.5 388.9,560.5 398.7,560.5 408.5,560.5 418.3,560.5 428.1,560.5 437.9,560.5 447.7,560.5 457.5,542.0 467.3,560.5 477.1,560.5 486.9,551.2 496.7,560.5 506.5,549.7 516.3,560.5 526.1,560.5 535.9,560.5 545.7,560.5 555.5,560.5 565.3,560.5 575.1,560.5 584.9,548.6 594.7,560.5 604.5,560.5 614.3,560.5 624.1,560.5 633.9,560.5 643.7,558.9 653.5,560.5 663.3,560.5 673.1,560.5 682.9,552.9 692.7,560.5 702.5,549.9 712.3,560.5 722.1,549.5 731.9,560.5 741.7,560.5 751.5,560.5 761.3,560.5 771.1,560.5 780.9,560.5 790.7,560.5 800.5,560.5 810.3,560.5"/>
<polyline class="m" stroke="#00b828" points="192.9,560.5 202.7,560.5 212.5,560.5 222.3,560.5 232.1,560.5 241.9,560.5 251.7,560.5 261.5,560.5 271.3,560.5 281.1,560.5 290.9,560.5 300.7,560.5 310.5,560.5 320.3,560.5 330.1,560.5 339.9,560.5 349.7,560.5 359.5,560.5 369.3,560.5 379.1,560.5 388.9,560.5 398.7,560.5 408.5,560.5 418.3,560.5 428.1,560.5 437.9,560.5 447.7,559.8 457.5,560.5 467.3,547.2 477.1,514.1 486.9,560.5 496.7,560.5 506.5,560.5 516.3,539.3 526.1,560.5 535.9,560.5 545.7,560.5 555.5,560.5 565.3,560.5 575.1,553.4 584.9,560.5 594.7,560.5 604.5,560.5 614.3,560.5 624.1,560.5 633.9,528.7 643.7,560.5 653.5,560.5 663.3,560.5 673.1,560.5 682.9,544.6 692.7,560.5 702.5,560.5 712.3,560.5 722.1,560.5 731.9,560.5 741.7,560.5 751.5,560.5 761.3,553.9 771.1,560.5 780.9,560.5 790.7,560.5 800.5,560.5 810.3,560.5"/>
<polyline class="m" stroke="#08c800" points="192.9,560.5 202.7,560.5 212.5,560.5 222.3,560.5 232.1,560.5 241.9,560.5 251.7,560.5 261.5,560.5 271.3,560.5 281.1,560.5 290.9,560.5 300.7,560.5 310.5,560.5 320.3,560.5 330.1,560.5 339.9,560.5 349.7,560.5 359.5,560.5 369.3,560.5 379.1,560.5 388.9,560.5 398.7,560.5 408.5,560.5 418.3,560.5 428.1,560.5 437.9,560.5 447.7,552.8 457.5,559.5 467.3,560.5 477.1,560.5 486.9,560.5 496.7,560.5 506.5,560.5 516.3,560.5 526.1,560.5 535.9,560.5 545.7,560.5 555.5,560.5 565.3,560.5 575.1,560.5 584.9,560.5 594.7,560.5 604.5,560.5 614.3,560.5 624.1,560.5 633.9,560.5 643.7,560.5 653.5,560.5 663.3,560.5 673.1,560.5 682.9,560.5 692.7,560.5 702.5,560.5 712.3,560.5 722.1,560.5 731.9,559.2 741.7,547.4 751.5,560.5 761.3,560.5 771.1,556.7 780.9,560.5 790.7,560.5 800.5,560.5 810.3,560.5"/>
<polyline class="m" stroke="#c8c800" points="192.9,560.5 202.7,560.5 212.5,560.5 222.3,560.5 232.1,560.5 241.9,560.5 251.7,560.5 261.5,560.5 271.3,560.5 281.1,560.5 290.9,560.5 300.7,560.5 310.5,560.5 320.3,560.5 330.1,560.5 339.9,560.5 349.7,560.5 359.5,560.5 369.3,560.5 379.1,560.5 388.9,560.5 398.7,560.5 408.5,560.5 418.3,560.5 428.1,560.5 437.9,560.5 447.7,560.5 457.5,560.5 467.3,560.5 477.1,560.5 486.9,560.5 496.7,560.5 506.5,560.5 516.3,560.5 526.1,526.0 535.9,514.8 545.7,511.5 555.5,556.5 565.3,560.5 575.1,560.5 584.9,560.5 594.7,560.5 604.5,530.0 614.3,491.6 624.1,556.5 633.9,560.5 643.7,560.5 653.5,560.5 663.3,560.5 673.1,560.5 682.9,558.9 692.7,557.4 702.5,560.5 712.3,560.5 722.1,560.5 731.9,560.5 741.7,560.5 751.5,560.5 761.3,560.5 771.1,560.5 780.9,560.5 790.7,560.5 800.5,560.5 810.3,560.5"/>
<polyline class="m" stroke="#c8b000" points="192.9,560.5 202.7,560.5 212.5,560.5 222.3,560.5 232.1,560.5 241.9,560.5 251.7,560.5 261.5,560.5 271.3,560.5 281.1,560.5 290.9,560.5 300.7,560.5 310.5,560.5 320.3,560.5 330.1,560.5 339.9,560.5 349.7,560.5 359.5,560.5 369.3,560.5 379.1,560.5 388.9,560.5 398.7,560.5 408.5,560.5 418.3,560.5 428.1,560.5 437.9,560.1 447.7,560.5 457.5,560.5 467.3,555.8 477.1,560.5 486.9,535.3 496.7,560.5 506.5,560.5 516.3,546.8 526.1,560.5 535.9,560.5 545.7,558.8 555.5,557.5 565.3,558.7 575.1,560.5 584.9,560.5 594.7,560.3 604.5,560.5 614.3,560.5 624.1,560.5 633.9,514.1 643.7,560.5 653.5,558.3 663.3,560.5 673.1,560.5 682.9,560.5 692.7,560.5 702.5,560.5 712.3,560.5 722.1,555.9 731.9,560.5 741.7,560.5 751.5,560.5 761.3,560.5 771.1,560.5 780.9,560.5 790.7,508.0 800.5,532.7 810.3,531.4"/>
<polyline class="m" stroke="#c8a000" points="192.9,560.5 202.7,560.5 212.5,560.5 222.3,560.5 232.1,560.5 241.9,560.5 251.7,560.5 261.5,560.5 271.3,560.5 281.1,560.5 290.9,560.5 300.7,560.5 310.5,560.5 320.3,560.5 330.1,560.5 339.9,560.5 349.7,560.5 359.5,560.5 369.3,560.5 379.1,560.5 388.9,560.5 398.7,560.5 408.5,560.5 418.3,560.5 428.1,560.5 437.9,560.5 447.7,551.7 457.5,560.5 467.3,560.5 477.1,560.5 486.9,558.8 496.7,557.2 506.5,560.5 516.3,560.5 526.1,553.3 535.9,559.2 545.7,560.5 555.5,560.5 565.3,560.5 575.1,560.5 584.9,560.5 594.7,560.5 604.5,560.5 614.3,560.5 624.1,560.5 633.9,560.5 643.7,560.5 653.5,560.5 663.3,560.5 673.1,560.5 682.9,560.5 692.7,560.5 702.5,560.5 712.3,353.8 722.1,520.8 731.9,555.2 741.7,560.5 751.5,559.4 761.3,560.5 771.1,560.5 780.9,560.5 790.7,551.9 800.5,560.5 810.3,560.2"/>
<polyline class="m" stroke="#d09000" points="192.9,560.5 202.7,560.5 212.5,560.5 222.3,560.5 232.1,560.5 241.9,560.5 251.7,560.5 261.5,560.5 271.3,560.5 281.1,560.5 290.9,560.5 300.7,560.5 310.5,560.5 320.3,560.5 330.1,560.5 339.9,560.5 349.7,560.5 359.5,560.5 369.3,560.5 379.1,560.5 388.9,560.5 398.7,560.5 408.5,560.5 418.3,560.5 428.1,560.5 437.9,536.0 447.7,560.5 457.5,560.5 467.3,560.5 477.1,560.5 486.9,560.5 496.7,560.5 506.5,555.3 516.3,560.5 526.1,560.5 535.9,560.5 545.7,560.5 555.5,560.5 565.3,560.5 575.1,560.5 584.9,560.5 594.7,560.5 604.5,560.5 614.3,560.5 624.1,560.5 633.9,495.6 643.7,560.5 653.5,560.5 663.3,560.5 673.1,560.5 682.9,560.5 692.7,560.5 702.5,560.5 712.3,560.5 722.1,560.5 731.9,560.5 741.7,537.7 751.5,555.4 761.3,560.5 771.1,560.5 780.9,560.5 790.7,560.5 800.5,560.5 810.3,560.5"/>
<polyline class="m" stroke="#c87800" points="192.9,560.5 202.7,560.5 212.5,560.5 222.3,560.5 232.1,560.5 241.9,560.5 251.7,560.5 261.5,560.5 271.3,560.5 281.1,560.5 290.9,560.5 300.7,560.5 310.5,560.5 320.3,560.5 330.1,560.5 339.9,560.5 349.7,560.5 359.5,560.5 369.3,560.5 379.1,560.5 388.9,560.5 398.7,560.5 408.5,560.5 418.3,560.5 428.1,560.5 437.9,560.5 447.7,560.5 457.5,560.5 467.3,560.5 477.1,499.6 486.9,560.5 496.7,560.5 506.5,560.5 516.3,560.5 526.1,560.5 535.9,560.5 545.7,336.6 555.5,555.2 565.3,560.5 575.1,560.5 584.9,560.5 594.7,560.5 604.5,560.5 614.3,560.5 624.1,560.5 633.9,560.5 643.7,553.9 653.5,475.7 663.3,451.9 673.1,547.2 682.9,560.5 692.7,560.5 702.5,560.5 712.3,560.5 722.1,558.3 731.9,560.5 741.7,560.5 751.5,560.5 761.3,560.5 771.1,560.5 780.9,560.5 790.7,560.5 800.5,560.5 810.3,560.5"/>
<polyline class="m" stroke="#c06800" points="192.9,560.5 202.7,560.5 212.5,560.5 222.3,560.5 232.1,560.5 241.9,560.5 251.7,560.5 261.5,560.5 271.3,560.5 281.1,560.5 290.9,560.5 300.7,560.5 310.5,560.5 320.3,560.5 330.1,560.5 339.9,560.5 349.7,560.5 359.5,560.5 369.3,560.5 379.1,560.5 388.9,560.5 398.7,560.5 408.5,560.5 418.3,560.5 428.1,560.5 437.9,560.5 447.7,560.5 457.5,560.5 467.3,560.5 477.1,560.5 486.9,560.0 496.7,560.5 506.5,560.5 516.3,560.5 526.1,560.5 535.9,560.5 545.7,560.5 555.5,560.5 565.3,560.5 575.1,552.2 584.9,560.5 594.7,560.5 604.5,560.5 614.3,560.5 624.1,560.5 633.9,560.5 643.7,560.5 653.5,462.4 663.3,560.5 673.1,560.5 682.9,560.5 692.7,560.5 702.5,560.5 712.3,560.5 722.1,557.6 731.9,560.5 741.7,560.5 751.5,560.5 761.3,560.5 771.1,560.5 780.9,560.5 790.7,560.5 800.5,560.5 810.3,560.5"/>
<polyline class="m" stroke="#c05808" points="192.9,560.5 202.7,556.5 212.5,540.6 222.3,560.5 232.1,560.5 241.9,560.5 251.7,560.5 261.5,560.5 271.3,560.5 281.1,560.5 290.9,560.5 300.7,560.5 310.5,560.5 320.3,560.5 330.1,560.5 339.9,560.5 349.7,560.5 359.5,560.5 369.3,560.5 379.1,560.5 388.9,560.5 398.7,560.5 408.5,560.5 418.3,560.5 428.1,560.5 437.9,560.5 447.7,560.5 457.5,560.5 467.3,560.5 477.1,560.5 486.9,560.5 496.7,560.5 506.5,552.5 516.3,518.1 526.1,520.8 535.9,552.5 545.7,560.5 555.5,560.5 565.3,560.5 575.1,560.5 584.9,560.5 594.7,560.5 604.5,560.5 614.3,534.0 624.1,560.5 633.9,560.5 643.7,560.5 653.5,560.5 663.3,559.8 673.1,560.5 682.9,560.5 692.7,560.5 702.5,560.5 712.3,560.5 722.1,560.5 731.9,560.5 741.7,560.5 751.5,556.5 761.3,560.5 771.1,560.5 780.9,560.5 790.7,560.5 800.5,560.5 810.3,560.5"/>
<polyline class="m" stroke="#c04820" points="192.9,560.5 202.7,560.5 212.5,560.5 222.3,560.5 232.1,560.5 241.9,560.5 251.7,560.5 261.5,560.5 271.3,560.5 281.1,560.5 290.9,560.5 300.7,560.5 310.5,560.5 320.3,560.5 330.1,560.5 339.9,560.5 349.7,560.5 359.5,548.6 369.3,537.3 379.1,560.5 388.9,560.5 398.7,560.5 408.5,560.5 418.3,560.5 428.1,560.5 437.9,560.5 447.7,560.5 457.5,560.5 467.3,560.5 477.1,560.5 486.9,560.5 496.7,560.5 506.5,560.5 516.3,560.5 526.1,560.5 535.9,560.5 545.7,560.5 555.5,560.5 565.3,560.5 575.1,560.5 584.9,560.5 594.7,560.5 604.5,560.5 614.3,560.5 624.1,560.5 633.9,559.1 643.7,560.5 653.5,560.5 663.3,560.5 673.1,560.5 682.9,557.4 692.7,560.5 702.5,560.5 712.3,560.5 722.1,560.5 731.9,560.5 741.7,560.5 751.5,518.1 761.3,371.7 771.1,549.9 780.9,552.0 790.7,560.5 800.5,560.5 810.3,560.5"/>
<polyline class="m" stroke="#b03020" points="192.9,560.5 202.7,560.5 212.5,560.5 222.3,560.5 232.1,560.5 241.9,560.5 251.7,560.5 261.5,560.5 271.3,560.5 281.1,560.5 290.9,560.5 300.7,560.5 310.5,560.5 320.3,560.5 330.1,560.5 339.9,560.5 349.7,560.5 359.5,560.5 369.3,560.5 379.1,560.5 388.9,560.5 398.7,560.5 408.5,560.5 418.3,560.5 428.1,560.5 437.9,560.5 447.7,560.5 457.5,553.9 467.3,522.1 477.1,560.5 486.9,560.5 496.7,560.5 506.5,560.5 516.3,560.5 526.1,560.5 535.9,560.5 545.7,560.5 555.5,557.2 565.3,560.5 575.1,560.5 584.9,558.6 594.7,560.5 604.5,560.5 614.3,560.5 624.1,560.5 633.9,560.5 643.7,560.5 653.5,560.5 663.3,560.5 673.1,560.5 682.9,551.8 692.7,560.5 702.5,558.8 712.3,560.5 722.1,560.5 731.9,560.5 741.7,559.0 751.5,531.4 761.3,510.8 771.1,552.5 780.9,558.5 790.7,560.5 800.5,560.5 810.3,560.5"/>
<polyline class="m" stroke="#981818" points="192.9,560.5 202.7,560.5 212.5,560.5 222.3,560.5 232.1,560.5 241.9,560.5 251.7,560.5 261.5,560.5 271.3,560.5 281.1,560.5 290.9,560.5 300.7,560.5 310.5,560.5 320.3,560.5 330.1,560.5 339.9,560.5 349.7,560.5 359.5,560.5 369.3,560.5 379.1,560.5 388.9,560.5 398.7,560.5 408.5,560.5 418.3,557.5 428.1,560.5 437.9,560.5 447.7,560.5 457.5,560.5 467.3,560.5 477.1,560.5 486.9,560.4 496.7,560.5 506.5,560.5 516.3,560.5 526.1,560.5 535.9,560.5 545.7,560.5 555.5,519.4 565.3,560.5 575.1,560.5 584.9,560.5 594.7,560.5 604.5,560.5 614.3,560.5 624.1,560.5 633.9,560.5 643.7,560.5 653.5,560.5 663.3,560.5 673.1,560.5 682.9,560.5 692.7,560.5 702.5,560.5 712.3,560.5 722.1,557.6 731.9,560.5 741.7,560.5 751.5,560.5 761.3,550.0 771.1,560.5 780.9,494.2 790.7,417.9 800.5,432.0 810.3,534.0"/>
<polyline class="m" stroke="#0850d0" points="192.9,560.5 202.7,560.5 212.5,560.5 222.3,560.5 232.1,560.5 241.9,560.5 251.7,560.5 261.5,560.5 271.3,560.5 281.1,560.5 290.9,560.5 300.7,560.5 310.5,560.5 320.3,560.5 330.1,560.5 339.9,560.5 349.7,560.5 359.5,560.5 369.3,560.5 379.1,560.5 388.9,560.5 398.7,560.5 408.5,560.5 418.3,560.5 428.1,559.3 437.9,560.5 447.7,560.5 457.5,560.5 467.3,560.5 477.1,560.5 486.9,560.5 496.7,560.5 506.5,560.5 516.3,560.5 526.1,560.5 535.9,560.5 545.7,560.5 555.5,560.5 565.3,560.5 575.1,560.5 584.9,560.5 594.7,560.5 604.5,560.5 614.3,560.5 624.1,560.5 633.9,560.5 643.7,560.5 653.5,560.5 663.3,560.5 673.1,560.5 682.9,551.7 692.7,560.5 702.5,560.5 712.3,560.5 722.1,560.5 731.9,556.4 741.7,557.6 751.5,560.5 761.3,558.4 771.1,560.5 780.9,560.5 790.7,560.5 800.5,560.5 810.3,560.5"/>
<polyline class="m" stroke="#0870c8" points="192.9,560.5 202.7,560.5 212.5,560.5 222.3,560.5 232.1,560.5 241.9,560.5 251.7,560.5 261.5,560.5 271.3,560.5 281.1,560.5 290.9,560.5 300.7,560.5 310.5,560.5 320.3,560.5 330.1,560.5 339.9,560.5 349.7,560.5 359.5,560.5 369.3,560.5 379.1,560.5 388.9,560.5 398.7,560.5 408.5,560.5 418.3,560.5 428.1,560.5 437.9,483.6 447.7,547.2 457.5,560.5 467.3,560.5 477.1,410.8 486.9,556.9 496.7,526.0 506.5,560.5 516.3,530.0 526.1,560.5 535.9,560.5 545.7,560.5 555.5,560.5 565.3,560.5 575.1,560.5 584.9,560.5 594.7,560.5 604.5,560.5 614.3,560.5 624.1,560.0 633.9,560.5 643.7,560.5 653.5,560.5 663.3,560.5 673.1,560.5 682.9,560.5 692.7,560.5 702.5,560.5 712.3,560.5 722.1,560.5 731.9,560.5 741.7,560.5 751.5,560.5 761.3,560.5 771.1,560.5 780.9,560.5 790.7,560.5 800.5,560.5 810.3,560.5"/>
<polyline class="m" stroke="#0890c8" points="192.9,560.5 202.7,560.5 212.5,560.5 222.3,560.5 232.1,560.5 241.9,560.5 251.7,560.5 261.5,560.5 271.3,560.5 281.1,560.5 290.9,560.5 300.7,560.5 310.5,560.5 320.3,560.5 330.1,560.5 339.9,560.5 349.7,560.5 359.5,560.5 369.3,560.5 379.1,560.5 388.9,560.5 398.7,560.5 408.5,560.5 418.3,552.5 428.1,560.5 437.9,560.2 447.7,560.5 457.5,560.5 467.3,560.5 477.1,555.2 486.9,560.5 496.7,560.5 506.5,560.5 516.3,560.5 526.1,560.5 535.9,560.5 545.7,560.5 555.5,553.6 565.3,560.5 575.1,556.8 584.9,560.5 594.7,560.5 604.5,560.5 614.3,554.4 624.1,560.5 633.9,560.5 643.7,560.5 653.5,560.5 663.3,560.5 673.1,552.0 682.9,560.5 692.7,560.5 702.5,560.5 712.3,560.5 722.1,560.5 731.9,560.5 741.7,560.5 751.5,560.5 761.3,557.9 771.1,557.2 780.9,560.5 790.7,560.5 800.5,560.5 810.3,560.5"/>
<polyline class="m" stroke="#00a8b8" points="192.9,560.5 202.7,555.2 212.5,515.5 222.3,560.5 232.1,560.5 241.9,545.3 251.7,560.5 261.5,560.5 271.3,560.5 281.1,560.5 290.9,560.5 300.7,560.5 310.5,560.5 320.3,560.5 330.1,560.5 339.9,560.5 349.7,560.5 359.5,560.5 369.3,560.5 379.1,560.5 388.9,560.5 398.7,560.5 408.5,560.5 418.3,560.5 428.1,560.5 437.9,560.5 447.7,560.5 457.5,560.5 467.3,560.5 477.1,560.5 486.9,560.5 496.7,560.5 506.5,560.5 516.3,511.5 526.1,560.5 535.9,560.5 545.7,560.5 555.5,560.5 565.3,560.5 575.1,532.7 584.9,560.5 594.7,560.5 604.5,560.5 614.3,560.5 624.1,527.4 633.9,560.5 643.7,560.5 653.5,560.5 663.3,560.5 673.1,560.5 682.9,560.5 692.7,560.5 702.5,560.5 712.3,560.5 722.1,539.2 731.9,560.5 741.7,560.5 751.5,560.5 761.3,560.5 771.1,560.5 780.9,560.5 790.7,560.5 800.5,553.0 810.3,560.5"/>
<polyline class="m" stroke="#00a888" points="192.9,560.5 202.7,560.5 212.5,560.5 222.3,560.5 232.1,560.5 241.9,560.5 251.7,560.5 261.5,560.5 271.3,560.5 281.1,560.5 290.9,560.5 300.7,560.5 310.5,560.5 320.3,560.5 330.1,560.5 339.9,560.5 349.7,560.5 359.5,560.5 369.3,560.5 379.1,560.5 388.9,560.5 398.7,560.5 408.5,560.5 418.3,560.5 428.1,558.4 437.9,560.5 447.7,548.6 457.5,560.5 467.3,560.5 477.1,560.5 486.9,560.5 496.7,560.5 506.5,544.6 516.3,555.5 526.1,560.5 535.9,560.5 545.7,560.5 555.5,560.5 565.3,549.9 575.1,560.5 584.9,560.5 594.7,560.5 604.5,560.5 614.3,560.5 624.1,534.5 633.9,560.5 643.7,539.3 653.5,540.6 663.3,560.5 673.1,552.5 682.9,560.5 692.7,560.5 702.5,560.5 712.3,560.5 722.1,560.5 731.9,560.5 741.7,560.5 751.5,560.5 761.3,560.5 771.1,560.5 780.9,560.5 790.7,543.8 800.5,560.5 810.3,560.5"/>
<polyline class="m" stroke="#00a868" points="192.9,560.5 202.7,560.5 212.5,560.5 222.3,560.5 232.1,560.5 241.9,560.5 251.7,560.5 261.5,560.5 271.3,560.5 281.1,560.5 290.9,560.5 300.7,560.5 310.5,560.5 320.3,560.5 330.1,560.5 339.9,560.5 349.7,560.5 359.5,560.5 369.3,560.5 379.1,560.5 388.9,560.5 398.7,560.5 408.5,560.5 418.3,560.5 428.1,477.0 437.9,539.3 447.7,560.5 457.5,560.5 467.3,519.4 477.1,560.5 486.9,560.5 496.7,560.5 506.5,560.5 516.3,560.5 526.1,560.5 535.9,372.4 545.7,542.0 555.5,560.5 565.3,560.5 575.1,560.5 584.9,557.0 594.7,530.0 604.5,560.5 614.3,560.5 624.1,560.5 633.9,457.1 643.7,560.5 653.5,560.5 663.3,560.5 673.1,552.9 682.9,560.5 692.7,560.5 702.5,560.5 712.3,522.1 722.1,508.8 731.9,430.6 741.7,553.9 751.5,560.5 761.3,560.5 771.1,560.5 780.9,560.5 790.7,560.5 800.5,560.5 810.3,560.5"/>
<polyline class="m" stroke="#00b048" points="192.9,560.5 202.7,560.5 212.5,560.5 222.3,560.5 232.1,560.5 241.9,560.5 251.7,560.5 261.5,560.5 271.3,560.5 281.1,560.5 290.9,560.5 300.7,560.5 310.5,560.5 320.3,560.5 330.1,560.5 339.9,560.5 349.7,560.5 359.5,560.5 369.3,560.5 379.1,560.5 388.9,560.5 398.7,560.5 408.5,560.5 418.3,560.5 428.1,560.5 437.9,560.5 447.7,560.5 457.5,560.5 467.3,543.4 477.1,560.5 486.9,560.5 496.7,560.5 506.5,560.5 516.3,560.5 526.1,560.5 535.9,560.5 545.7,560.5 555.5,560.5 565.3,560.5 575.1,560.5 584.9,560.5 594.7,560.5 604.5,560.5 614.3,551.2 624.1,560.5 633.9,560.5 643.7,555.9 653.5,560.5 663.3,560.5 673.1,560.5 682.9,560.5 692.7,560.5 702.5,560.5 712.3,560.5 722.1,560.5 731.9,560.5 741.7,560.5 751.5,560.5 761.3,560.5 771.1,554.1 780.9,560.5 790.7,560.5 800.5,560.5 810.3,560.5"/>
<polyline class="m" stroke="#00b828" points="192.9,560.5 202.7,560.5 212.5,560.5 222.3,560.5 232.1,560.5 241.9,560.5 251.7,560.5 261.5,560.5 271.3,560.5 281.1,560.5 290.9,560.5 300.7,560.5 310.5,560.5 320.3,560.5 330.1,560.5 339.9,560.5 349.7,560.5 359.5,560.5 369.3,560.5 379.1,560.5 388.9,560.5 398.7,560.5 408.5,560.5 418.3,560.5 428.1,560.5 437.9,560.5 447.7,560.5 457.5,560.5 467.3,560.5 477.1,534.0 486.9,553.9 496.7,560.5 506.5,560.5 516.3,560.4 526.1,560.5 535.9,560.5 545.7,560.5 555.5,560.5 565.3,560.5 575.1,560.5 584.9,560.5 594.7,551.0 604.5,560.5 614.3,560.5 624.1,542.0 633.9,536.6 643.7,560.5 653.5,560.5 663.3,560.5 673.1,547.6 682.9,560.5 692.7,560.5 702.5,558.0 712.3,560.5 722.1,560.5 731.9,559.0 741.7,557.2 751.5,560.5 761.3,560.5 771.1,560.5 780.9,560.5 790.7,560.5 800.5,560.5 810.3,560.5"/>
<polyline class="m" stroke="#08c800" points="192.9,560.5 202.7,560.5 212.5,560.5 222.3,560.5 232.1,560.5 241.9,560.5 251.7,560.5 261.5,560.5 271.3,560.5 281.1,560.5 290.9,560.5 300.7,560.5 310.5,560.5 320.3,560.5 330.1,560.5 339.9,560.5 349.7,560.5 359.5,560.5 369.3,560.5 379.1,560.5 388.9,560.5 398.7,560.5 408.5,560.5 418.3,560.5 428.1,560.5 437.9,560.5 447.7,560.5 457.5,556.9 467.3,560.5 477.1,560.5 486.9,560.5 496.7,560.5 506.5,560.5 516.3,560.5 526.1,560.5 535.9,560.5 545.7,560.5 555.5,560.5 565.3,560.5 575.1,560.5 584.9,560.5 594.7,560.5 604.5,560.5 614.3,560.5 624.1,560.5 633.9,560.5 643.7,560.5 653.5,560.5 663.3,560.5 673.1,560.5 682.9,560.5 692.7,560.5 702.5,560.5 712.3,560.5 722.1,560.5 731.9,560.5 741.7,559.5 751.5,560.5 761.3,560.5 771.1,555.7 780.9,560.5 790.7,560.5 800.5,560.5 810.3,560.5"/>
<polyline class="m" stroke="#c8c800" points="192.9,560.5 202.7,560.5 212.5,560.5 222.3,560.5 232.1,560.5 241.9,560.5 251.7,560.5 261.5,560.5 271.3,560.5 281.1,560.5 290.9,560.5 300.7,560.5 310.5,560.5 320.3,560.5 330.1,560.5 339.9,560.5 349.7,560.5 359.5,560.5 369.3,560.5 379.1,560.5 388.9,560.5 398.7,560.5 408.5,560.5 418.3,559.5 428.1,560.1 437.9,560.5 447.7,560.5 457.5,560.5 467.3,560.5 477.1,560.5 486.9,560.5 496.7,560.5 506.5,560.5 516.3,560.5 526.1,560.5 535.9,560.5 545.7,560.5 555.5,483.6 565.3,560.5 575.1,560.5 584.9,555.9 594.7,560.5 604.5,560.5 614.3,560.5 624.1,560.5 633.9,560.5 643.7,560.5 653.5,560.5 663.3,560.5 673.1,560.5 682.9,560.5 692.7,560.5 702.5,560.5 712.3,560.5 722.1,554.4 731.9,560.5 741.7,560.5 751.5,524.7 761.3,552.5 771.1,560.5 780.9,560.5 790.7,560.5 800.5,560.5 810.3,553.8"/>
<polyline class="k" stroke="#0808f0" points="192.9,203.8 202.7,201.0 212.5,200.3 222.3,194.5 232.1,187.7 241.9,188.7 251.7,196.0 261.5,195.0 271.3,192.4 281.1,193.8 290.9,203.5 300.7,189.0 310.5,178.9 320.3,186.1 330.1,188.5 339.9,181.5 349.7,171.0 359.5,171.9 369.3,175.8 379.1,166.1 388.9,158.4 398.7,161.3 408.5,164.2 418.3,165.0 428.1,151.6 437.9,155.0 447.7,162.2 457.5,162.2 467.3,152.6 477.1,169.5 486.9,167.1 496.7,171.9 506.5,168.0 516.3,171.9 526.1,187.4 535.9,216.4 545.7,201.9 555.5,192.2 565.3,170.0 575.1,151.6 584.9,144.4 594.7,151.6 604.5,191.2 614.3,226.1 624.1,207.4 633.9,217.5 643.7,223.5 653.5,209.0 663.3,199.9 673.1,213.8 682.9,242.7 692.7,254.1 702.5,246.2 712.3,239.7 722.1,261.3 731.9,272.5 741.7,272.5 751.5,253.4 761.3,255.1 771.1,262.9 780.9,262.9 790.7,258.0 800.5,258.0 810.3,240.6"/>
<polyline class="k" stroke="#0808f0" points="192.9,560.5 202.7,551.2 212.5,556.5 222.3,560.5 232.1,560.5 241.9,560.5 251.7,560.5 261.5,560.5 271.3,560.5 281.1,560.5 290.9,560.5 300.7,560.5 310.5,560.5 320.3,560.5 330.1,560.5 339.9,560.5 349.7,560.5 359.5,560.5 369.3,560.5 379.1,560.5 388.9,560.5 398.7,560.5 408.5,560.5 418.3,560.5 428.1,560.5 437.9,559.2 447.7,545.3 457.5,558.5 467.3,557.9 477.1,548.6 486.9,559.2 496.7,560.5 506.5,560.5 516.3,560.5 526.1,560.5 535.9,560.5 545.7,560.5 555.5,560.5 565.3,560.5 575.1,560.5 584.9,560.5 594.7,560.5 604.5,550.6 614.3,545.3 624.1,560.5 633.9,560.5 643.7,560.5 653.5,560.5 663.3,560.5 673.1,511.5 682.9,553.9 692.7,560.5 702.5,560.5 712.3,560.5 722.1,560.5 731.9,502.2 741.7,510.8 751.5,560.5 761.3,560.5 771.1,560.5 780.9,560.5 790.7,560.5 800.5,560.5 810.3,560.5"/>
<polyline class="k" stroke="#e9e9e9" points="192.9,206.1 202.7,202.2 212.5,201.6 222.3,196.0 232.1,189.0 241.9,189.7 251.7,194.5 261.5,192.3 271.3,189.0 281.1,193.4 290.9,201.1 300.7,190.9 310.5,181.8 320.3,190.9 330.1,196.3 339.9,189.3 349.7,179.2 359.5,182.5 369.3,185.8 379.1,180.0 388.9,176.7 398.7,173.4 408.5,170.3 418.3,167.1 428.1,155.5 437.9,166.1 447.7,175.8 457.5,184.9 467.3,181.2 477.1,200.5 486.9,215.5 496.7,223.2 506.5,225.5 516.3,228.6 526.1,233.8 535.9,236.8 545.7,234.8 555.5,246.4 565.3,250.7 575.1,250.7 584.9,241.6 594.7,251.3 604.5,259.0 614.3,258.0 624.1,247.9 633.9,253.2 643.7,261.9 653.5,260.9 663.3,255.1 673.1,259.0 682.9,265.8 692.7,263.2 702.5,258.0 712.3,261.9 722.1,267.0 731.9,265.3 741.7,258.8 751.5,260.9 761.3,263.5 771.1,262.2 780.9,260.7 790.7,259.4 800.5,266.3 810.3,264.4"/>
<polyline class="k" stroke="#e9e9e9" points="192.9,560.5 202.7,557.9 212.5,557.6 222.3,559.2 232.1,560.1 241.9,559.7 251.7,560.4 261.5,560.5 271.3,560.5 281.1,560.5 290.9,560.5 300.7,560.5 310.5,560.5 320.3,560.5 330.1,560.5 339.9,560.5 349.7,560.5 359.5,560.5 369.3,560.5 379.1,560.5 388.9,560.5 398.7,560.5 408.5,560.5 418.3,560.0 428.1,557.5 437.9,552.8 447.7,556.6 457.5,558.5 467.3,551.9 477.1,547.2 486.9,557.2 496.7,556.8 506.5,556.2 516.3,555.6 526.1,556.2 535.9,551.4 545.7,547.5 555.5,550.4 565.3,559.1 575.1,558.2 584.9,557.6 594.7,556.2 604.5,557.6 614.3,556.2 624.1,557.2 633.9,549.4 643.7,556.8 653.5,552.4 663.3,555.3 673.1,555.6 682.9,557.2 692.7,558.2 702.5,557.2 712.3,551.0 722.1,556.2 731.9,551.8 741.7,555.6 751.5,553.3 761.3,551.4 771.1,555.3 780.9,553.3 790.7,551.8 800.5,553.3 810.3,556.2"/>
<polyline class="k" stroke="#ec3a40" points="192.9,230.7 202.7,231.7 212.5,238.1 222.3,236.5 232.1,229.0 241.9,231.7 251.7,236.5 261.5,235.6 271.3,229.8 281.1,235.2 290.9,240.6 300.7,241.0 310.5,235.8 320.3,234.8 330.1,240.2 339.9,237.8 349.7,233.9 359.5,237.8 369.3,244.2 379.1,246.5 388.9,237.8 398.7,241.7 408.5,246.5 418.3,245.9 428.1,236.4 437.9,240.7 447.7,246.5 457.5,249.4 467.3,244.9 477.1,247.1 486.9,249.7 496.7,246.8 506.5,243.9 516.3,246.4 526.1,249.7 535.9,247.8 545.7,244.9 555.5,249.7 565.3,254.9 575.1,255.5 584.9,251.1 594.7,252.6 604.5,257.5 614.3,258.0 624.1,252.6 633.9,258.0 643.7,265.2 653.5,263.7 663.3,258.4 673.1,262.3 682.9,267.2 692.7,266.2 702.5,260.4 712.3,263.3 722.1,268.1 731.9,269.5 741.7,265.2 751.5,267.6 761.3,270.8 771.1,269.1 780.9,265.4 790.7,266.1 800.5,270.0 810.3,271.0"/>
<polyline class="k" stroke="#10d810" points="192.9,207.5 202.7,203.7 212.5,203.7 222.3,197.9 232.1,191.1 241.9,191.6 251.7,197.4 261.5,197.0 271.3,188.2 281.1,186.6 290.9,194.8 300.7,184.7 310.5,175.5 320.3,180.8 330.1,184.7 339.9,177.8 349.7,167.4 359.5,168.0 369.3,171.9 379.1,162.3 388.9,151.0 398.7,153.5 408.5,156.0 418.3,154.1 428.1,137.1 437.9,143.8 447.7,155.5 457.5,161.8 467.3,151.6 477.1,162.5 486.9,174.8 496.7,189.3 506.5,166.7 516.3,180.6 526.1,185.4 535.9,170.0 545.7,156.4 555.5,248.4 565.3,289.0 575.1,295.7 584.9,300.6 594.7,279.3 604.5,286.1 614.3,279.3 624.1,275.9 633.9,294.8 643.7,292.9 653.5,297.7 663.3,296.7 673.1,298.7 682.9,291.9 692.7,279.3 702.5,262.9 712.3,261.4 722.1,260.7 731.9,247.4 741.7,234.8 751.5,239.2 761.3,241.8 771.1,232.9 780.9,221.3 790.7,226.1 800.5,229.0 810.3,220.7"/>
<polyline class="k" stroke="#10d810" points="192.9,560.5 202.7,555.9 212.5,557.2 222.3,559.2 232.1,560.5 241.9,558.9 251.7,560.5 261.5,560.5 271.3,560.5 281.1,560.5 290.9,560.5 300.7,560.5 310.5,560.5 320.3,560.5 330.1,560.5 339.9,560.5 349.7,560.5 359.5,560.5 369.3,560.5 379.1,560.5 388.9,560.5 398.7,560.5 408.5,560.5 418.3,560.5 428.1,560.5 437.9,560.5 447.7,547.2 457.5,559.2 467.3,560.5 477.1,560.5 486.9,556.5 496.7,548.6 506.5,559.2 516.3,560.5 526.1,560.5 535.9,560.5 545.7,560.5 555.5,541.3 565.3,545.3 575.1,545.9 584.9,547.5 594.7,560.5 604.5,560.5 614.3,560.5 624.1,510.8 633.9,510.1 643.7,527.4 653.5,560.5 663.3,560.5 673.1,560.5 682.9,560.5 692.7,560.5 702.5,560.5 712.3,560.5 722.1,560.5 731.9,560.5 741.7,560.5 751.5,560.5 761.3,560.5 771.1,560.5 780.9,560.5 790.7,560.5 800.5,560.5 810.3,560.5"/>
</g>
<rect x="163.5" y="30.5" width="647.0" height="530.0" fill="none" stroke="#fff" stroke-width="1.04"/>
<path d="M810.5 547.50h-3.5M810.5 533.50h-5.5M810.5 520.50h-3.5M810.5 507.50h-5.5M810.5 494.50h-3.5M810.5 480.50h-5.5M810.5 467.50h-3.5M810.5 454.50h-5.5M810.5 441.50h-3.5M810.5 427.50h-5.5M810.5 414.50h-3.5M810.5 401.50h-5.5M810.5 388.50h-3.5M810.5 374.50h-5.5M810.5 361.50h-3.5M810.5 348.50h-5.5M810.5 335.50h-3.5M810.5 321.50h-5.5M810.5 308.50h-3.5M810.5 295.50h-5.5M810.5 282.50h-3.5M810.5 268.50h-5.5M810.5 255.50h-3.5M810.5 242.50h-5.5M810.5 229.50h-3.5M810.5 215.50h-5.5M810.5 202.50h-3.5M810.5 189.50h-5.5M810.5 176.50h-3.5M810.5 162.50h-5.5M810.5 149.50h-3.5M810.5 136.50h-5.5M810.5 123.50h-3.5M810.5 109.50h-5.5M810.5 96.50h-3.5M810.5 83.50h-5.5M810.5 70.50h-3.5M810.5 56.50h-5.5M810.5 43.50h-3.5" stroke="#fff" stroke-width="1.04" fill="none"/>
<text class="t" x="154.0" y="33.1" text-anchor="end">35</text>
<text class="t" x="154.0" y="81.3" text-anchor="end">30</text>
<text class="t" x="154.0" y="129.5" text-anchor="end">25</text>
<text class="t" x="154.0" y="177.6" text-anchor="end">20</text>
<text class="t" x="154.0" y="225.8" text-anchor="end">15</text>
<text class="t" x="154.0" y="274.0" text-anchor="end">10</text>
<text class="t" x="154.0" y="322.2" text-anchor="end">5</text>
<text class="t" x="154.0" y="370.4" text-anchor="end">0</text>
<text class="t" x="154.0" y="418.5" text-anchor="end">-5</text>
<text class="t" x="154.0" y="466.7" text-anchor="end">-10</text>
<text class="t" x="154.0" y="514.9" text-anchor="end">-15</text>
<text class="t" x="154.0" y="563.1" text-anchor="end">-20</text>
<text class="t" x="817.3" y="563.1">0</text>
<text class="t" x="817.3" y="430.6">10</text>
<text class="t" x="817.3" y="298.1">20</text>
<text class="t" x="817.3" y="165.6">30</text>
<text class="t" x="817.3" y="33.1">40</text>
<text class="t" x="162.6" y="577" text-anchor="middle">18Aug 00z</text>
<text class="t" x="240.9" y="577" text-anchor="middle">20Aug 00z</text>
<text class="t" x="319.2" y="577" text-anchor="middle">22Aug 00z</text>
<text class="t" x="397.5" y="577" text-anchor="middle">24Aug 00z</text>
<text class="t" x="475.8" y="577" text-anchor="middle">26Aug 00z</text>
<text class="t" x="554.1" y="577" text-anchor="middle">28Aug 00z</text>
<text class="t" x="632.4" y="577" text-anchor="middle">30Aug 00z</text>
<text class="t" x="710.7" y="577" text-anchor="middle">01Sep 00z</text>
<text class="t" x="789.0" y="577" text-anchor="middle">03Sep 00z</text>
<text class="t" x="486.5" y="592.5" text-anchor="middle">Date (UTC)</text>
<text class="t" transform="translate(134.4 296.4) rotate(-90)" text-anchor="middle">850 hPa Temp. (°C)</text>
<text class="t" transform="translate(841.9 297) rotate(-90)" text-anchor="middle">Niederschlag (mm)</text>
<text x="120.3" y="603.5" font-size="16">GFS Ensemble, 47.5N, 19E</text>
<text x="793.6" y="603.5" font-size="16" text-anchor="end">Wetterzentrale.de</text>
<path class="lg" stroke="#0828d8" d="M-3 41.1H7.9"/>
<text class="t" x="8.2" y="43.0">P1</text>
<path class="lg" stroke="#0850d0" d="M53.2 41.1H63.8"/>
<text class="t" x="64.4" y="43.0">P2</text>
<path class="lg" stroke="#0870c8" d="M-3 56.1H7.9"/>
<text class="t" x="8.2" y="58.0">P3</text>
<path class="lg" stroke="#0890c8" d="M53.2 56.1H63.8"/>
<text class="t" x="64.4" y="58.0">P4</text>
<path class="lg" stroke="#00a8b8" d="M-3 71.1H7.9"/>
<text class="t" x="8.2" y="73.0">P5</text>
<path class="lg" stroke="#00a888" d="M53.2 71.1H63.8"/>
<text class="t" x="64.4" y="73.0">P6</text>
<path class="lg" stroke="#00a868" d="M-3 86.1H7.9"/>
<text class="t" x="8.2" y="88.0">P7</text>
<path class="lg" stroke="#00b048" d="M53.2 86.1H63.8"/>
<text class="t" x="64.4" y="88.0">P8</text>
<path class="lg" stroke="#00b828" d="M-3 101.1H7.9"/>
<text class="t" x="8.2" y="103.0">P9</text>
<path class="lg" stroke="#08c800" d="M53.2 101.1H63.8"/>
<text class="t" x="64.4" y="103.0">P10</text>
<path class="lg" stroke="#c8c800" d="M-3 116.1H7.9"/>
<text class="t" x="8.2" y="118.0">P11</text>
<path class="lg" stroke="#c8b000" d="M53.2 116.1H63.8"/>
<text class="t" x="64.4" y="118.0">P12</text>
<path class="lg" stroke="#c8a000" d="M-3 131.1H7.9"/>
<text class="t" x="8.2" y="133.0">P13</text>
<path class="lg" stroke="#d09000" d="M53.2 131.1H63.8"/>
<text class="t" x="64.4" y="133.0">P14</text>
<path class="lg" stroke="#c87800" d="M-3 146.1H7.9"/>
<text class="t" x="8.2" y="148.0">P15</text>
<path class="lg" stroke="#c06800" d="M53.2 146.1H63.8"/>
<text class="t" x="64.4" y="148.0">P16</text>
<path class="lg" stroke="#c05808" d="M-3 161.1H7.9"/>
<text class="t" x="8.2" y="163.0">P17</text>
<path class="lg" stroke="#c04820" d="M53.2 161.1H63.8"/>
<text class="t" x="64.4" y="163.0">P18</text>
<path class="lg" stroke="#b03020" d="M-3 176.1H7.9"/>
<text class="t" x="8.2" y="178.0">P19</text>
<path class="lg" stroke="#981818" d="M53.2 176.1H63.8"/>
<text class="t" x="64.4" y="178.0">P20</text>
<path class="lg" stroke="#0850d0" d="M-3 191.1H7.9"/>
<text class="t" x="8.2" y="193.0">P21</text>
<path class="lg" stroke="#0870c8" d="M53.2 191.1H63.8"/>
<text class="t" x="64.4" y="193.0">P22</text>
<path class="lg" stroke="#0890c8" d="M-3 205.7H7.9"/>
<text class="t" x="8.2" y="207.6">P23</text>
<path class="lg" stroke="#00a8b8" d="M53.2 205.7H63.8"/>
<text class="t" x="64.4" y="207.6">P24</text>
<path class="lg" stroke="#00a888" d="M-3 220.7H7.9"/>
<text class="t" x="8.2" y="222.6">P25</text>
<path class="lg" stroke="#00a868" d="M53.2 220.7H63.8"/>
<text class="t" x="64.4" y="222.6">P26</text>
<path class="lg" stroke="#00b048" d="M-3 235.7H7.9"/>
<text class="t" x="8.2" y="237.6">P27</text>
<path class="lg" stroke="#00b828" d="M53.2 235.7H63.8"/>
<text class="t" x="64.4" y="237.6">P28</text>
<path class="lg" stroke="#08c800" d="M-3 250.7H7.9"/>
<text class="t" x="8.2" y="252.6">P29</text>
<path class="lg" stroke="#c8c800" d="M53.2 250.7H63.8"/>
<text class="t" x="64.4" y="252.6">P30</text>
<path stroke="#0808f0" stroke-width="2.1" d="M-3 266.8H7.9"/>
<text class="t" x="8.2" y="268.7">Control</text>
<path stroke="#f4f4f4" stroke-width="2.4" d="M53.2 267.0H63.8"/>
<text class="t" x="64.4" y="268.7">Ens. mean</text>
<path stroke="#10d810" stroke-width="2.1" d="M-3 306.9H7.9"/>
<text class="t" x="8.2" y="308.7">Oper</text>
<path stroke="#ec3a40" stroke-width="2.1" d="M53.2 293.2H63.8"/>
<text class="t" x="64.4" y="296.7">1991-2020</text>
<text class="t" x="64.4" y="306.6">mean</text>
</svg></body></html>
